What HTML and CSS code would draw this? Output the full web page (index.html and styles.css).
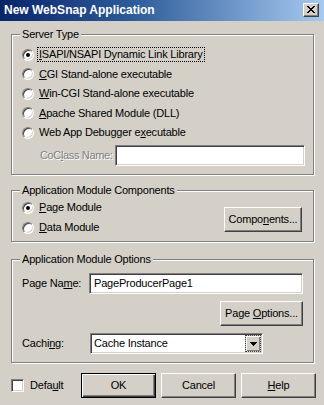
FILE: index.html
```html
<!DOCTYPE html>
<html>
<head>
<meta charset="utf-8">
<title>New WebSnap Application</title>
<link rel="stylesheet" href="styles.css">
</head>
<body>
<div class="titlebar">
  <span class="title">New WebSnap Application</span>
  <span class="close"><svg width="8" height="7" viewBox="0 0 8 7" shape-rendering="crispEdges"><rect x="0" y="0" width="2" height="1"/><rect x="6" y="0" width="2" height="1"/><rect x="1" y="1" width="2" height="1"/><rect x="5" y="1" width="2" height="1"/><rect x="2" y="2" width="4" height="1"/><rect x="3" y="3" width="2" height="1"/><rect x="2" y="4" width="4" height="1"/><rect x="1" y="5" width="2" height="1"/><rect x="5" y="5" width="2" height="1"/><rect x="0" y="6" width="2" height="1"/><rect x="6" y="6" width="2" height="1"/></svg></span>
</div>
<div class="content">
  <div class="group g1">
    <span class="legend">Server Type</span>
    <div class="radios r1">
      <div class="opt"><span class="radio checked"></span><span class="lbl focus"><u>I</u>SAPI/NSAPI Dynamic Link Library</span></div>
      <div class="opt"><span class="radio"></span><span class="lbl"><u>C</u>GI Stand-alone executable</span></div>
      <div class="opt"><span class="radio"></span><span class="lbl"><u>W</u>in-CGI Stand-alone executable</span></div>
      <div class="opt"><span class="radio"></span><span class="lbl"><u>A</u>pache Shared Module (DLL)</span></div>
      <div class="opt"><span class="radio"></span><span class="lbl">Web App Debugger e<u>x</u>ecutable</span></div>
    </div>
    <div class="field-row coclass">
      <span class="flabel disabled cl">CoC<u>l</u>ass Name:</span>
      <span class="edit ed-co"></span>
    </div>
  </div>

  <div class="group g2">
    <span class="legend">Application Module Components</span>
    <div class="g2row">
      <div class="radios r2">
        <div class="opt"><span class="radio checked"></span><span class="lbl"><u>P</u>age Module</span></div>
        <div class="opt"><span class="radio"></span><span class="lbl"><u>D</u>ata Module</span></div>
      </div>
      <span class="btn btn-comp"><span class="bt">Compo<u>n</u>ents...</span></span>
    </div>
  </div>

  <div class="group g3">
    <span class="legend">Application Module Options</span>
    <div class="field-row pn">
      <span class="flabel pl">Page Na<u>m</u>e:</span>
      <span class="edit ed-pn">PageProducerPage1</span>
    </div>
    <span class="btn btn-po"><span class="bt">Page <u>O</u>ptions...</span></span>
    <div class="field-row ca">
      <span class="flabel cal">Cachi<u>n</u>g:</span>
      <span class="edit combo"><span class="ctext">Cache Instance</span><span class="dd"><svg width="7" height="4" viewBox="0 0 7 4" shape-rendering="crispEdges"><rect x="0" y="0" width="7" height="1"/><rect x="1" y="1" width="5" height="1"/><rect x="2" y="2" width="3" height="1"/><rect x="3" y="3" width="1" height="1"/></svg></span></span>
    </div>
  </div>

  <div class="bottom">
    <div class="chk-wrap"><span class="checkbox"></span><span class="chk-lbl">Defa<u>u</u>lt</span></div>
    <div class="buttons">
      <span class="btn btn-main default"><span class="bt">OK</span></span>
      <span class="btn btn-main"><span class="bt">Cancel</span></span>
      <span class="btn btn-main"><span class="bt"><u>H</u>elp</span></span>
    </div>
  </div>
</div>
</body>
</html>
```
FILE: styles.css
```css
html, body {
  margin: 0;
  padding: 0;
}
body {
  width: 324px;
  height: 405px;
  overflow: hidden;
  background: #d4d0c8;
  font: 11px/13px "Liberation Sans", Arial, sans-serif;
  letter-spacing: -0.2px;
  color: #000;
}
u {
  text-decoration: underline;
  text-underline-offset: 1px;
}

.titlebar {
  height: 21px;
  display: flex;
  justify-content: space-between;
  align-items: flex-start;
  background: linear-gradient(to right, #0a246a 0%, #2c5a98 40%, #a6caf0 100%);
}
.title {
  color: #fff;
  font-weight: bold;
  font-size: 12px;
  letter-spacing: 0;
  line-height: 21px;
  padding-left: 4px;
}
.close {
  width: 16px;
  height: 14px;
  box-sizing: border-box;
  margin: 3px 5px 0 0;
  background: #d4d0c8;
  border: 1px solid;
  border-color: #fff #404040 #404040 #fff;
  box-shadow: inset -1px -1px 0 #808080;
  display: flex;
  align-items: center;
  justify-content: center;
  padding-bottom: 1px;
}
.close svg { display: block; fill: #000; }

.content {
  padding: 0 0 0 11px;
  display: flex;
  flex-direction: column;
}

.group {
  width: 303px;
  box-sizing: border-box;
  border: 1px solid #808080;
  box-shadow: inset 1px 1px 0 #fff, 1px 1px 0 #fff;
  padding: 0 10px 8px 10px;
  display: flex;
  flex-direction: column;
}
.g1 { margin-top: 13px; }
.g2 { margin-top: 15px; padding-bottom: 7px; }
.g3 { margin-top: 17px; }

.legend {
  align-self: flex-start;
  margin: -7px 0 0 -2px;
  padding: 0 2px;
  background: #d4d0c8;
  line-height: 13px;
}

.radios {
  display: flex;
  flex-direction: column;
}
.r1 { margin-top: 7px; gap: 6.5px; }
.r2 { gap: 7px; flex: 1; }

.opt {
  display: flex;
  align-items: center;
  height: 13px;
}
.radio {
  position: relative;
  width: 12px;
  height: 12px;
  box-sizing: border-box;
  border-radius: 50%;
  border: 1px solid;
  border-color: #808080 #fff #fff #808080;
  background: #fff;
  box-shadow: inset 1px 1px 0 #404040, inset -1px -1px 0 #d4d0c8;
  flex-shrink: 0;
}
.radio.checked::after {
  content: "";
  position: absolute;
  left: 3px;
  top: 3px;
  width: 4px;
  height: 4px;
  border-radius: 50%;
  background: #000;
}
.lbl {
  margin-left: 4px;
  padding: 0 1px;
  white-space: nowrap;
}
.lbl.focus {
  outline: 1px dotted #000;
  outline-offset: 0;
}

.field-row {
  display: flex;
  align-items: center;
}
.coclass { margin: 6px 0 0 18px; }
.flabel { white-space: nowrap; flex-shrink: 0; }
.cl { width: 75px; letter-spacing: -0.35px; }
.pl { width: 67px; }
.cal { width: 68px; }
.disabled {
  color: #808080;
  text-shadow: 1px 1px 0 #fff;
}

.edit {
  height: 21px;
  box-sizing: border-box;
  border: 1px solid;
  border-color: #808080 #fff #fff #808080;
  box-shadow: inset 1px 1px 0 #404040, inset -1px -1px 0 #d4d0c8;
  background: #fff;
  flex-shrink: 0;
  line-height: 19px;
  padding-left: 4px;
  white-space: nowrap;
}
.ed-co { width: 190px; }
.ed-pn { width: 214px; }

.pn { margin-top: 7px; }
.ca { margin-top: 7px; }

.combo {
  width: 173px;
  display: flex;
  justify-content: space-between;
  align-items: stretch;
  padding: 1px;
  line-height: 17px;
}
.ctext { padding-left: 2px; }
.dd {
  width: 16px;
  box-sizing: border-box;
  background: #d4d0c8;
  border: 1px dotted #404040;
  box-shadow: inset 1px 1px 0 #fff, inset -1px -1px 0 #808080;
  display: flex;
  align-items: center;
  justify-content: center;
}
.dd svg { display: block; fill: #000; }

.g2row {
  display: flex;
  margin-top: 4px;
  align-items: flex-start;
}

.btn {
  height: 25px;
  box-sizing: border-box;
  border: 1px solid;
  border-color: #fff #404040 #404040 #fff;
  box-shadow: inset -1px -1px 0 #808080;
  background: #d4d0c8;
  display: flex;
  align-items: center;
  justify-content: center;
  white-space: nowrap;
  flex-shrink: 0;
}
.bt { white-space: nowrap; }
.btn-comp {
  width: 78px;
  margin: 6px 1px 0 0;
}
.btn-po {
  width: 83px;
  align-self: flex-end;
  margin-top: 7px;
}

.bottom {
  margin-top: 10px;
  display: flex;
  align-items: center;
}
.chk-wrap {
  width: 70px;
  display: flex;
  align-items: center;
}
.checkbox {
  width: 13px;
  height: 13px;
  box-sizing: border-box;
  border: 1px solid;
  border-color: #808080 #fff #fff #808080;
  box-shadow: inset 1px 1px 0 #404040, inset -1px -1px 0 #d4d0c8;
  background: #fff;
}
.chk-lbl { margin-left: 6px; }
.buttons {
  display: flex;
  gap: 5px;
}
.btn-main { width: 75px; }
.btn.default {
  border: 1px solid #000;
  box-shadow: inset 1px 1px 0 #fff, inset -1px -1px 0 #404040, inset -2px -2px 0 #808080;
}
```
